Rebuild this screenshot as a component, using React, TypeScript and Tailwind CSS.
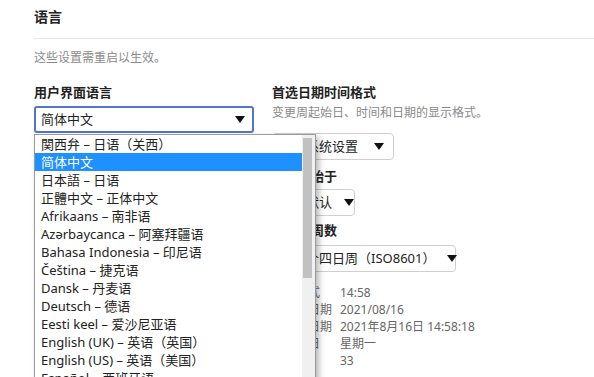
import React from "react";

const FONT = '"Noto Sans", "Noto Sans CJK SC", sans-serif';

function Arrow() {
  return (
    <svg width="10" height="7" viewBox="0 0 10 7" className="shrink-0">
      <polygon points="0,0 10,0 5,7" fill="#111" />
    </svg>
  );
}

function Select({ text, className }: { text: string; className?: string }) {
  return (
    <div
      className={
        "flex h-[27px] items-center justify-between rounded-[4px] border border-[#cfcfcf] bg-white pl-[7px] pr-[9px] text-[13px] text-[#222] " +
        (className ?? "")
      }
    >
      <span className="whitespace-nowrap">{text}</span>
      <span className="ml-[12px]">
        <Arrow />
      </span>
    </div>
  );
}

const items = [
  "関西弁 – 日语（关西）",
  "简体中文",
  "日本語 – 日语",
  "正體中文 – 正体中文",
  "Afrikaans – 南非语",
  "Azərbaycanca – 阿塞拜疆语",
  "Bahasa Indonesia – 印尼语",
  "Čeština – 捷克语",
  "Dansk – 丹麦语",
  "Deutsch – 德语",
  "Eesti keel – 爱沙尼亚语",
  "English (UK) – 英语（英国）",
  "English (US) – 英语（美国）",
  "Español – 西班牙语",
];

const rows: [string, string][] = [
  ["时间格式", "14:58"],
  ["短格式日期", "2021/08/16"],
  ["长格式日期", "2021年8月16日 14:58:18"],
  ["周起始日", "星期一"],
  ["周数", "33"],
];

export default function App() {
  return (
    <div
      className="h-[377px] w-[594px] overflow-hidden bg-white pl-[34px] pt-[7px]"
      style={{ fontFamily: FONT }}
    >
      <div className="border-b border-[#e6e6e6] pb-[11px] text-[14px] font-bold leading-[20px] text-[#222]">
        语言
      </div>
      <div className="mt-[10px] text-[12px] leading-[18px] text-[#8a8a8a]">
        这些设置需重启以生效。
      </div>
      <div className="mt-[16px] flex">
        <div className="relative w-[220px]">
          <div className="text-[13px] font-bold leading-[18px] text-[#222]">用户界面语言</div>
          <div className="mt-[5px] flex h-[27px] items-center justify-between rounded-[3px] border-2 border-[#5273cf] bg-white pl-[5px] pr-[7px] text-[13px] text-[#222]">
            <span>简体中文</span>
            <Arrow />
          </div>
          <div className="absolute left-0 top-[51px] z-10 flex h-[260px] w-[282px] border border-[#9a9a9a] bg-white shadow-[3px_3px_6px_rgba(0,0,0,0.28)]">
            <div className="flex-1">
              {items.map((t, i) => (
                <div
                  key={t}
                  className={
                    "h-[18px] whitespace-nowrap pl-[6px] text-[13px] leading-[18px] " +
                    (i === 1 ? "bg-[#1e90ff] text-white" : "text-[#222]")
                  }
                >
                  {t}
                </div>
              ))}
            </div>
            <div className="w-[13px] bg-[#f0f0f0] pt-[3px]">
              <div className="ml-[1px] h-[140px] w-[9px] bg-[#c1c1c1]" />
            </div>
          </div>
        </div>
        <div className="ml-[18px]">
          <div className="text-[13px] font-bold leading-[18px] text-[#222]">首选日期时间格式</div>
          <div className="mt-[3px] text-[12px] leading-[18px] text-[#8a8a8a]">
            变更周起始日、时间和日期的显示格式。
          </div>
          <Select text="使用系统设置" className="mt-[11px] w-[122px]" />
          <div className="mt-[7px] text-[13px] font-bold leading-[18px] text-[#222]">每周开始于</div>
          <Select text="系统默认" className="mt-[4px] w-[83px]" />
          <div className="mt-[5px] text-[13px] font-bold leading-[18px] text-[#222]">每年的周数</div>
          <Select text="第一个四日周（ISO8601）" className="mt-[6px] w-[184px]" />
          <div className="mt-[12px] grid grid-cols-[68px_auto] text-[12px] leading-[17px] text-[#666]">
            {rows.map(([k, v]) => (
              <React.Fragment key={k}>
                <div>{k}</div>
                <div className="whitespace-nowrap">{v}</div>
              </React.Fragment>
            ))}
          </div>
        </div>
      </div>
    </div>
  );
}
